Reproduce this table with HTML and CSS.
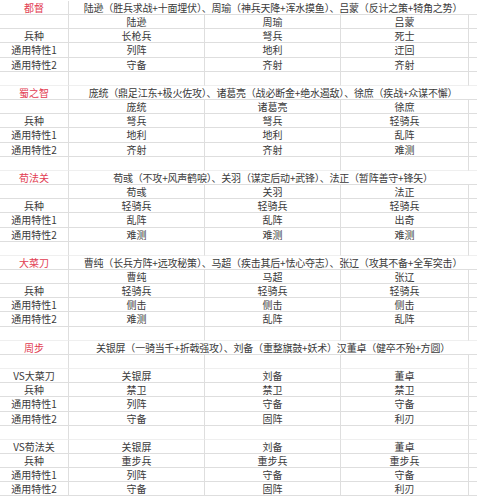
FILE: index.html
```html
<!DOCTYPE html>
<html lang="zh">
<head>
<meta charset="utf-8">
<title>阵容</title>
<link rel="stylesheet" href="styles.css">
</head>
<body>
<div class="sheet">
  <div class="c lab red">都督</div><div class="c head">陆逊（胜兵求战+十面埋伏）、周瑜（神兵天降+浑水摸鱼）、吕蒙（反计之策+犄角之势）</div>
  <div class="c"></div><div class="c">陆逊</div><div class="c">周瑜</div><div class="c">吕蒙</div><div class="c e"></div>
  <div class="c">兵种</div><div class="c">长枪兵</div><div class="c">弩兵</div><div class="c">死士</div><div class="c e"></div>
  <div class="c">通用特性1</div><div class="c">列阵</div><div class="c">地利</div><div class="c">迂回</div><div class="c e"></div>
  <div class="c">通用特性2</div><div class="c">守备</div><div class="c">齐射</div><div class="c">齐射</div><div class="c e"></div>
  <div class="c b"></div><div class="c b"></div><div class="c b"></div><div class="c b"></div><div class="c b e"></div>

  <div class="c lab red">蜀之智</div><div class="c head">庞统（鼎足江东+极火佐攻）、诸葛亮（战必断金+绝水遏敌）、徐庶（疾战+众谋不懈）</div>
  <div class="c"></div><div class="c">庞统</div><div class="c">诸葛亮</div><div class="c">徐庶</div><div class="c e"></div>
  <div class="c">兵种</div><div class="c">弩兵</div><div class="c">弩兵</div><div class="c">轻骑兵</div><div class="c e"></div>
  <div class="c">通用特性1</div><div class="c">地利</div><div class="c">地利</div><div class="c">乱阵</div><div class="c e"></div>
  <div class="c">通用特性2</div><div class="c">齐射</div><div class="c">齐射</div><div class="c">难测</div><div class="c e"></div>
  <div class="c b"></div><div class="c b"></div><div class="c b"></div><div class="c b"></div><div class="c b e"></div>

  <div class="c lab red">荀法关</div><div class="c head">荀彧（不攻+风声鹤唳）、关羽（谋定后动+武锋）、法正（暂阵善守+锋矢）</div>
  <div class="c"></div><div class="c">荀彧</div><div class="c">关羽</div><div class="c">法正</div><div class="c e"></div>
  <div class="c">兵种</div><div class="c">轻骑兵</div><div class="c">轻骑兵</div><div class="c">轻骑兵</div><div class="c e"></div>
  <div class="c">通用特性1</div><div class="c">乱阵</div><div class="c">乱阵</div><div class="c">出奇</div><div class="c e"></div>
  <div class="c">通用特性2</div><div class="c">难测</div><div class="c">难测</div><div class="c">难测</div><div class="c e"></div>
  <div class="c b"></div><div class="c b"></div><div class="c b"></div><div class="c b"></div><div class="c b e"></div>

  <div class="c lab red">大菜刀</div><div class="c head">曹纯（长兵方阵+远攻秘策）、马超（疾击其后+怯心夺志）、张辽（攻其不备+全军突击）</div>
  <div class="c"></div><div class="c">曹纯</div><div class="c">马超</div><div class="c">张辽</div><div class="c e"></div>
  <div class="c">兵种</div><div class="c">轻骑兵</div><div class="c">轻骑兵</div><div class="c">轻骑兵</div><div class="c e"></div>
  <div class="c">通用特性1</div><div class="c">侧击</div><div class="c">侧击</div><div class="c">侧击</div><div class="c e"></div>
  <div class="c">通用特性2</div><div class="c">难测</div><div class="c">乱阵</div><div class="c">乱阵</div><div class="c e"></div>
  <div class="c b"></div><div class="c b"></div><div class="c b"></div><div class="c b"></div><div class="c b e"></div>

  <div class="c lab red">周步</div><div class="c head">关银屏（一骑当千+折戟强攻）、刘备（重整旗鼓+妖术）汉董卓（健卒不殆+方圆）</div>
  <div class="c b"></div><div class="c b"></div><div class="c b"></div><div class="c b"></div><div class="c b e"></div>
  <div class="c">VS大菜刀</div><div class="c">关银屏</div><div class="c">刘备</div><div class="c">董卓</div><div class="c e"></div>
  <div class="c">兵种</div><div class="c">禁卫</div><div class="c">禁卫</div><div class="c">禁卫</div><div class="c e"></div>
  <div class="c">通用特性1</div><div class="c">列阵</div><div class="c">守备</div><div class="c">守备</div><div class="c e"></div>
  <div class="c">通用特性2</div><div class="c">守备</div><div class="c">固阵</div><div class="c">利刃</div><div class="c e"></div>
  <div class="c b"></div><div class="c b"></div><div class="c b"></div><div class="c b"></div><div class="c b e"></div>
  <div class="c">VS荀法关</div><div class="c">关银屏</div><div class="c">刘备</div><div class="c">董卓</div><div class="c e"></div>
  <div class="c">兵种</div><div class="c">重步兵</div><div class="c">重步兵</div><div class="c">重步兵</div><div class="c e"></div>
  <div class="c">通用特性1</div><div class="c">列阵</div><div class="c">守备</div><div class="c">守备</div><div class="c e"></div>
  <div class="c">通用特性2</div><div class="c">守备</div><div class="c">固阵</div><div class="c">利刃</div><div class="c e"></div>
</div>
</body>
</html>
```
FILE: styles.css
```css
html, body {
  margin: 0;
  padding: 0;
  background: #ffffff;
}
body {
  font-family: "Noto Sans CJK SC", "Liberation Sans", sans-serif;
  font-size: 10px;
  color: #3a3a3a;
}
.sheet {
  display: grid;
  grid-template-columns: 69px 136px 136px 128px 1fr;
  grid-auto-rows: 14.17px;
  padding-top: 1px;
  width: 477px;
  overflow: hidden;
}
.c {
  box-sizing: border-box;
  border-right: 1px solid #dedede;
  border-bottom: 1px solid #dedede;
  text-align: center;
  line-height: 13px;
  white-space: nowrap;
  overflow: visible;
}
.c.e {
  border-right: none;
}
.c.b {
  border-bottom-color: #efefef;
}
.head {
  grid-column: 2 / 6;
  border-right: none;
  letter-spacing: -0.2px;
}
.red {
  color: #e23c52;
}
```
